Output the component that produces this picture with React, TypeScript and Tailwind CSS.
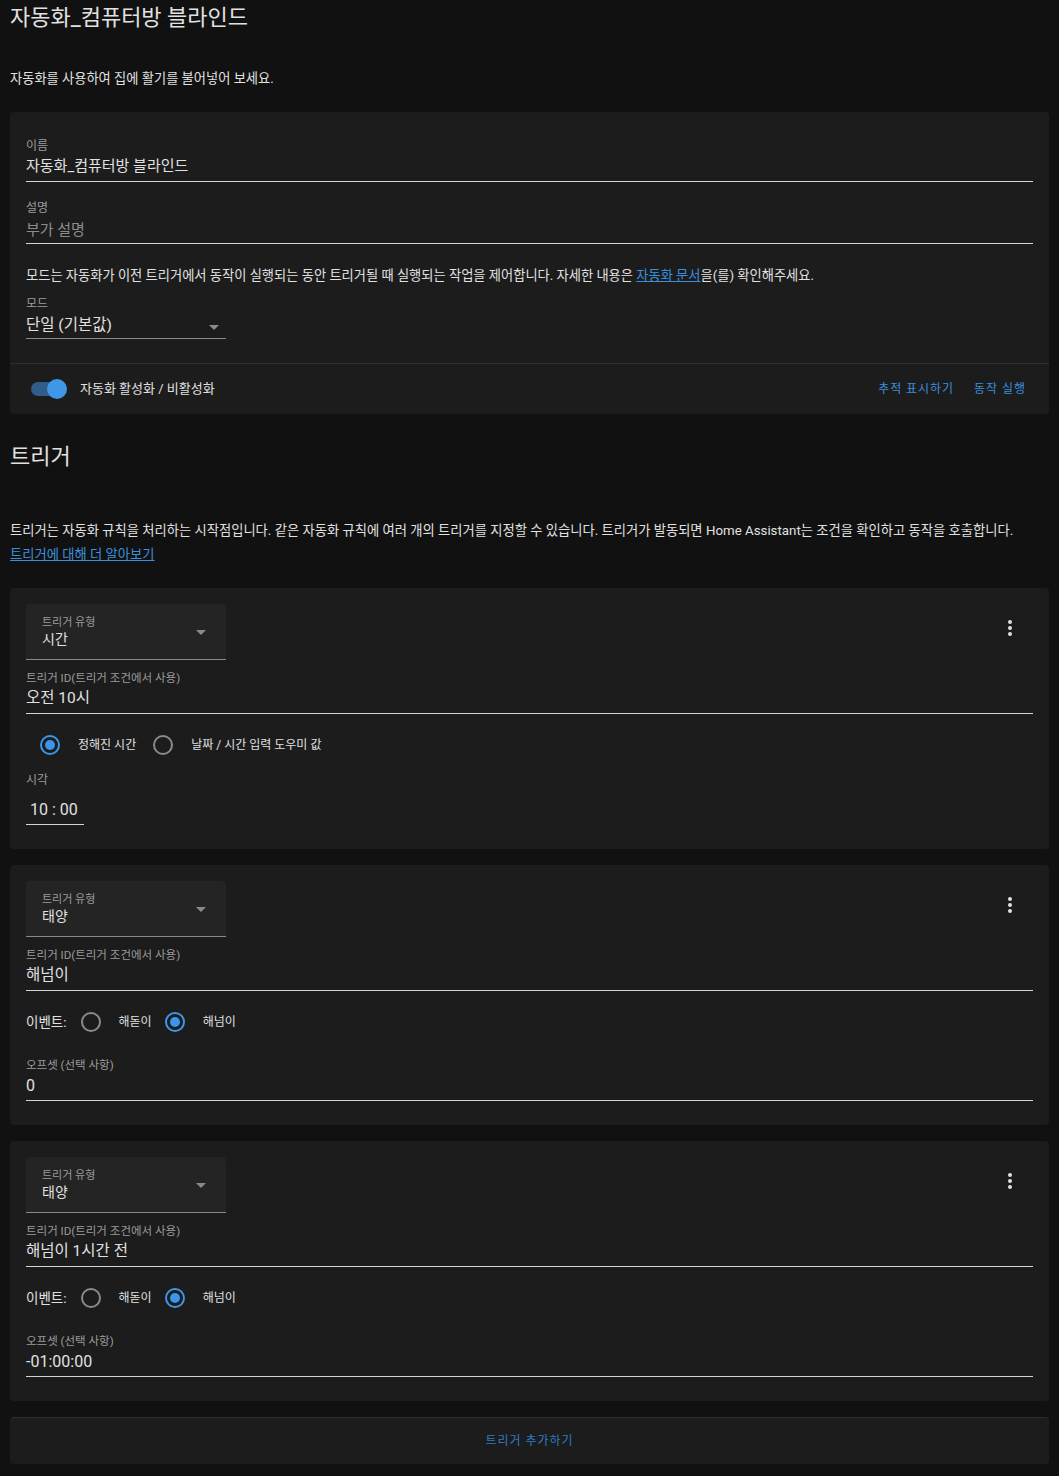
import React from "react";

const font = "font-['Roboto','Noto_Sans_CJK_KR',sans-serif]";

const Radio = ({ checked }: { checked?: boolean }) => (
  <span
    className={
      checked
        ? "flex h-5 w-5 shrink-0 items-center justify-center rounded-full border-2 border-[#3b96eb]"
        : "flex h-5 w-5 shrink-0 items-center justify-center rounded-full border-2 border-[#8a8a8a]"
    }
  >
    {checked && <span className="h-[10px] w-[10px] rounded-full bg-[#3b96eb]" />}
  </span>
);

const Caret = ({ color = "#8a8a8a" }: { color?: string }) => (
  <svg width="10" height="5" viewBox="0 0 10 5">
    <path d="M0 0 L10 0 L5 5 Z" fill={color} />
  </svg>
);

const Dots = () => (
  <svg width="24" height="24" viewBox="0 0 24 24" fill="#e1e1e1">
    <path d="M12,16A2,2 0 0,1 14,18A2,2 0 0,1 12,20A2,2 0 0,1 10,18A2,2 0 0,1 12,16M12,10A2,2 0 0,1 14,12A2,2 0 0,1 12,14A2,2 0 0,1 10,12A2,2 0 0,1 12,10M12,4A2,2 0 0,1 14,6A2,2 0 0,1 12,8A2,2 0 0,1 10,6A2,2 0 0,1 12,4Z" />
  </svg>
);

const TypeSelect = ({ value }: { value: string }) => (
  <div className="flex h-[56px] w-[200px] items-center justify-between rounded-t-[4px] border-b border-[#8a8a8a] bg-[#242424] pl-4 pr-5">
    <div className="flex flex-col pt-[2px]">
      <span className="text-[11px] leading-[14px] text-[#9b9b9b]">트리거 유형</span>
      <span className="-mt-[1px] text-[14px] leading-[20px] text-[#e1e1e1]">{value}</span>
    </div>
    <span className="mt-[2px]">
      <Caret />
    </span>
  </div>
);

const TriggerHead = ({ value }: { value: string }) => (
  <div className="flex items-start justify-between">
    <TypeSelect value={value} />
    <span className="mr-[11px] mt-[12px]">
      <Dots />
    </span>
  </div>
);

const IdField = ({ value }: { value: string }) => (
  <div className="mt-[10px]">
    <div className="text-[11.5px] leading-[16px] text-[#9b9b9b]">트리거 ID(트리거 조건에서 사용)</div>
    <div className="border-b border-[#d5d5d5] pb-[3px] text-[15.5px] leading-[24px] text-[#e1e1e1]">{value}</div>
  </div>
);

const SunTrigger = ({ id, offset }: { id: string; offset: string }) => (
  <div className="rounded-[4px] bg-[#1c1c1c] px-4 pb-6 pt-4">
    <TriggerHead value="태양" />
    <IdField value={id} />
    <div className="mt-[11px] flex h-10 items-center">
      <span className="text-[13.5px] text-[#e1e1e1]">이벤트:</span>
      <span className="ml-[14px]">
        <Radio />
      </span>
      <span className="ml-[18px] text-[12px] text-[#e1e1e1]">해돋이</span>
      <span className="ml-[13px]">
        <Radio checked />
      </span>
      <span className="ml-[18px] text-[12px] text-[#e1e1e1]">해넘이</span>
    </div>
    <div className="mt-[15px]">
      <div className="text-[11.5px] leading-[16px] text-[#9b9b9b]">오프셋 (선택 사항)</div>
      <div className="mt-[1px] border-b border-[#d5d5d5] pb-[2px] text-[16px] leading-[24px] text-[#e1e1e1]">{offset}</div>
    </div>
  </div>
);

export default function App() {
  return (
    <div className={`${font} min-h-[1476px] bg-[#111111] px-[10px] text-[#e1e1e1]`}>
      <h1 className="text-[22px] leading-[36px] text-[#e1e1e1]">자동화_컴퓨터방 블라인드</h1>
      <p className="mt-[33px] text-[13.25px] leading-[20px]">자동화를 사용하여 집에 활기를 불어넣어 보세요.</p>

      <div className="mt-[23px] rounded-[4px] bg-[#1c1c1c]">
        <div className="px-4 pt-[26px]">
          <div className="text-[12px] leading-[16px] text-[#9b9b9b]">이름</div>
          <div className="border-b border-[#d5d5d5] pb-[3px] text-[15px] leading-[24px]">자동화_컴퓨터방 블라인드</div>

          <div className="mt-[18px] text-[12px] leading-[16px] text-[#9b9b9b]">설명</div>
          <div className="border-b border-[#d5d5d5] pb-[1px] pt-[2px] text-[15px] leading-[24px] text-[#8c8c8c]">부가 설명</div>

          <p className="mt-[22px] text-[13.25px] leading-[20px]">
            모드는 자동화가 이전 트리거에서 동작이 실행되는 동안 트리거될 때 실행되는 작업을 제어합니다. 자세한 내용은{" "}
            <a className="text-[#3a90de] underline">자동화 문서</a>을(를) 확인해주세요.
          </p>

          <div className="mt-[10px] text-[12px] leading-[16px] text-[#9b9b9b]">모드</div>
          <div className="flex w-[200px] items-center justify-between border-b border-[#8a8a8a] pb-[1px] pt-[1px]">
            <span className="text-[15.5px] leading-[24px]">단일 (기본값)</span>
            <span className="mr-[7px] mt-[4px]">
              <Caret />
            </span>
          </div>
        </div>
        <div className="mt-6 flex h-[51px] items-center justify-between border-t border-[#2e2e2e] pl-[21px] pr-[23px]">
          <div className="flex items-center">
            <span className="relative flex h-5 w-[36px] items-center">
              <span className="h-[14px] w-[34px] rounded-full bg-[#2f5e8b]" />
              <span className="absolute right-0 h-5 w-5 rounded-full bg-[#3f97e8]" />
            </span>
            <span className="ml-[13px] text-[13px]">자동화 활성화 / 비활성화</span>
          </div>
          <div className="flex items-center gap-[20px] text-[12px] tracking-[0.08em] text-[#3a8fdc]">
            <span>추적 표시하기</span>
            <span>동작 실행</span>
          </div>
        </div>
      </div>

      <h2 className="mt-[27px] text-[22px] leading-[32px]">트리거</h2>
      <p className="mt-[46px] text-[13.3px] leading-[24px]">
        트리거는 자동화 규칙을 처리하는 시작점입니다. 같은 자동화 규칙에 여러 개의 트리거를 지정할 수 있습니다. 트리거가 발동되면 Home Assistant는 조건을 확인하고 동작을 호출합니다.
        <br />
        <a className="text-[#3a90de] underline">트리거에 대해 더 알아보기</a>
      </p>

      <div className="mt-[21px] flex flex-col gap-4">
        <div className="rounded-[4px] bg-[#1c1c1c] px-4 pb-6 pt-4">
          <TriggerHead value="시간" />
          <IdField value="오전 10시" />
          <div className="mt-[11px] flex h-10 items-center pl-[14px]">
            <Radio checked />
            <span className="ml-[18px] text-[12px]">정해진 시간</span>
            <span className="ml-[17px]">
              <Radio />
            </span>
            <span className="ml-[18px] text-[12px]">날짜 / 시간 입력 도우미 값</span>
          </div>
          <div className="mt-[7px] text-[12px] leading-[16px] text-[#9b9b9b]">시각</div>
          <div className="mt-[10px] w-[58px] border-b border-[#d5d5d5] pb-[2px] pl-[4px] text-[16px] leading-[24px]">10 : 00</div>
        </div>

        <SunTrigger id="해넘이" offset="0" />
        <SunTrigger id="해넘이 1시간 전" offset="-01:00:00" />

        <div className="flex h-[47px] items-center justify-center rounded-[4px] border-t border-[#2e2e2e] bg-[#1c1c1c] text-[12px] tracking-[0.08em] text-[#2f7cc4]">
          트리거 추가하기
        </div>
      </div>
    </div>
  );
}
